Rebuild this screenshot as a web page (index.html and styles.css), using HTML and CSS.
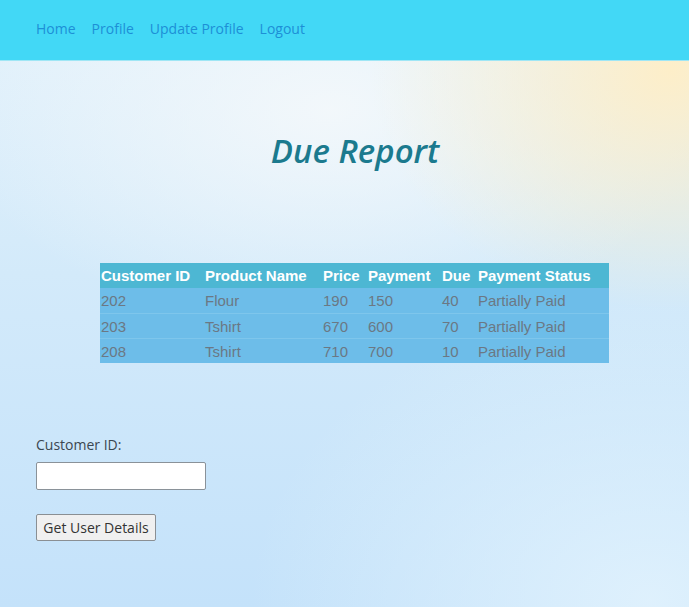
FILE: index.html
```html
<!DOCTYPE html>
<html>
<head>
<meta charset="utf-8">
<link rel="stylesheet" href="styles.css">
</head>
<body>
<header class="topbar">
  <nav class="nav">
    <a href="#">Home</a>
    <a href="#">Profile</a>
    <a href="#">Update Profile</a>
    <a href="#">Logout</a>
  </nav>
</header>
<main class="content">
  <h1 class="title">Due Report</h1>
  <table class="report">
    <colgroup>
      <col class="c1"><col class="c2"><col class="c3"><col class="c4"><col class="c5"><col class="c6">
    </colgroup>
    <thead>
      <tr><th>Customer ID</th><th>Product Name</th><th>Price</th><th>Payment</th><th>Due</th><th>Payment Status</th></tr>
    </thead>
    <tbody>
      <tr><td>202</td><td>Flour</td><td>190</td><td>150</td><td>40</td><td>Partially Paid</td></tr>
      <tr><td>203</td><td>Tshirt</td><td>670</td><td>600</td><td>70</td><td>Partially Paid</td></tr>
      <tr><td>208</td><td>Tshirt</td><td>710</td><td>700</td><td>10</td><td>Partially Paid</td></tr>
    </tbody>
  </table>
  <form class="lookup">
    <label class="label" for="cid">Customer ID:</label>
    <input class="field" id="cid" type="text">
    <button class="btn" type="button">Get User Details</button>
  </form>
</main>
</body>
</html>
```
FILE: styles.css
```css
html, body {
  margin: 0;
  height: 100%;
}
body {
  font-family: "Open Sans", "Noto Sans", sans-serif;
  background:
    radial-gradient(ellipse 300px 240px at 670px 70px, rgba(255, 238, 198, 0.95), rgba(255, 238, 198, 0) 100%),
    radial-gradient(ellipse 380px 220px at 330px 110px, rgba(246, 249, 251, 0.85), rgba(246, 249, 251, 0) 100%),
    radial-gradient(ellipse 400px 300px at 650px 600px, rgba(225, 242, 253, 0.9), rgba(225, 242, 253, 0) 100%),
    linear-gradient(180deg, #e4f2fb 0%, #d3eafa 45%, #c4e2fa 100%);
  min-height: 607px;
  overflow: hidden;
}
.topbar {
  background: #42d8f6;
  height: 61px;
  display: flex;
  align-items: center;
  border-bottom: 1px solid #9fe6f5;
  box-sizing: border-box;
}
.nav {
  display: flex;
  gap: 16px;
  padding-left: 36px;
  margin-top: -4px;
}
.nav a {
  color: #1d8fd6;
  text-decoration: none;
  font-size: 14px;
}
.content {
  padding: 0 15px 0 36px;
}
.title {
  margin: 70px 0 0 0;
  text-align: center;
  font-style: italic;
  font-weight: 600;
  font-size: 33px;
  color: #1b7a8e;
  height: 40px;
  line-height: 40px;
}
.report {
  margin: 92px 0 0 64px;
  border-collapse: collapse;
  width: 509px;
  table-layout: fixed;
  font-family: "Liberation Sans", Arial, sans-serif;
  font-size: 15px;
}
.c1 { width: 104px; }
.c2 { width: 118px; }
.c3 { width: 45px; }
.c4 { width: 74px; }
.c5 { width: 36px; }
.c6 { width: 132px; }
.report th {
  background: #4db7d3;
  color: #ffffff;
  text-align: left;
  font-weight: 700;
  height: 25px;
  padding: 0 0 0 1px;
  white-space: nowrap;
  overflow: hidden;
}
.report td {
  background: #6dbde9;
  color: #6b7884;
  height: 24px;
  padding: 0 0 0 1px;
  border-top: 1px solid #7ec6ec;
  white-space: nowrap;
}
.report tbody tr:first-child td {
  border-top: none;
  height: 25px;
}
.lookup {
  display: flex;
  flex-direction: column;
  align-items: flex-start;
  margin-top: 72px;
}
.label {
  font-size: 14px;
  color: #3b4750;
  line-height: 20px;
}
.field {
  margin-top: 7px;
  width: 170px;
  height: 28px;
  box-sizing: border-box;
  border: 1px solid #8a9299;
  border-radius: 2px;
  background: #ffffff;
}
.btn {
  margin-top: 24px;
  width: 120px;
  height: 27px;
  box-sizing: border-box;
  border: 1px solid #8a8f93;
  border-radius: 2px;
  background: #f0f0f0;
  font-family: "Open Sans", "Noto Sans", sans-serif;
  font-size: 14px;
  color: #333;
  padding: 0;
}
```
